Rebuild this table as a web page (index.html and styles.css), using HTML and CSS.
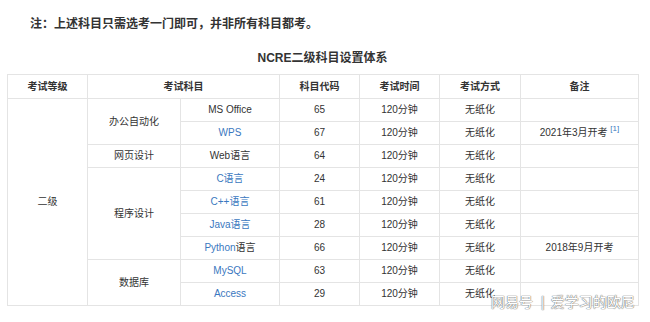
FILE: index.html
```html
<!DOCTYPE html>
<html lang="zh-CN">
<head>
<meta charset="utf-8">
<title>NCRE二级科目设置体系</title>
<link rel="stylesheet" href="styles.css">
</head>
<body>
<div class="page">
  <p class="note">注：上述科目只需选考一门即可，并非所有科目都考。</p>
  <div class="caption">NCRE二级科目设置体系</div>
  <table class="grid">
    <colgroup>
      <col class="c1"><col class="c2"><col class="c3"><col class="c4"><col class="c5"><col class="c6"><col class="c7">
    </colgroup>
    <thead>
      <tr><th>考试等级</th><th colspan="2">考试科目</th><th>科目代码</th><th>考试时间</th><th>考试方式</th><th>备注</th></tr>
    </thead>
    <tbody>
      <tr><td rowspan="9">二级</td><td rowspan="2">办公自动化</td><td>MS Office</td><td>65</td><td>120分钟</td><td>无纸化</td><td></td></tr>
      <tr><td><a class="lk">WPS</a></td><td>67</td><td>120分钟</td><td>无纸化</td><td>2021年3月开考 <sup class="ref">[1]</sup></td></tr>
      <tr><td>网页设计</td><td>Web语言</td><td>64</td><td>120分钟</td><td>无纸化</td><td></td></tr>
      <tr><td rowspan="4">程序设计</td><td><a class="lk">C语言</a></td><td>24</td><td>120分钟</td><td>无纸化</td><td></td></tr>
      <tr><td><a class="lk">C++语言</a></td><td>61</td><td>120分钟</td><td>无纸化</td><td></td></tr>
      <tr><td><a class="lk">Java语言</a></td><td>28</td><td>120分钟</td><td>无纸化</td><td></td></tr>
      <tr><td><a class="lk">Python</a>语言</td><td>66</td><td>120分钟</td><td>无纸化</td><td>2018年9月开考</td></tr>
      <tr><td rowspan="2">数据库</td><td><a class="lk">MySQL</a></td><td>63</td><td>120分钟</td><td>无纸化</td><td></td></tr>
      <tr><td><a class="lk">Access</a></td><td>29</td><td>120分钟</td><td>无纸化</td><td></td></tr>
    </tbody>
  </table>
  <div class="mark">网易号<span class="bar">|</span>爱学习的欧尼</div>
</div>
</body>
</html>
```

FILE: styles.css
```css
html, body {
  margin: 0;
  padding: 0;
  background: #fff;
}
body {
  font-family: "Liberation Sans", "Noto Sans CJK SC", sans-serif;
  color: #333;
}
.page {
  position: relative;
  width: 650px;
  height: 322px;
  padding: 16px 0 0 7px;
  box-sizing: border-box;
}
.note {
  margin: 0;
  padding-left: 23px;
  font-size: 12px;
  line-height: 16px;
  font-weight: bold;
  color: #333;
}
.caption {
  margin-top: 18px;
  width: 631px;
  text-align: center;
  font-size: 12px;
  line-height: 16px;
  font-weight: bold;
  color: #333;
}
.grid {
  margin-top: 8px;
  width: 631px;
  border-collapse: collapse;
  table-layout: fixed;
  font-size: 10px;
}
.c1 { width: 80px; }
.c2 { width: 93px; }
.c3 { width: 99px; }
.c4 { width: 80px; }
.c5 { width: 80px; }
.c6 { width: 81px; }
.c7 { width: 118px; }
.grid th, .grid td {
  border: 1px solid #e4e4e4;
  text-align: center;
  vertical-align: middle;
  padding: 0;
  line-height: 14px;
  color: #333;
}
.grid th {
  height: 23px;
  font-weight: bold;
}
.grid td {
  height: 22px;
}
.lk {
  color: #3a78c0;
  text-decoration: none;
}
.ref {
  color: #3a78c0;
  font-size: 8px;
  line-height: 0;
  vertical-align: 5px;
}
.mark {
  position: absolute;
  left: 491px;
  top: 292px;
  font-size: 14px;
  line-height: 20px;
  color: #fff;
  text-shadow: 0 0 1px #777, 0 0 1px #777, 0 0 1px #999;
  white-space: nowrap;
}
.bar {
  margin: 0 6px 0 8px;
}
```
